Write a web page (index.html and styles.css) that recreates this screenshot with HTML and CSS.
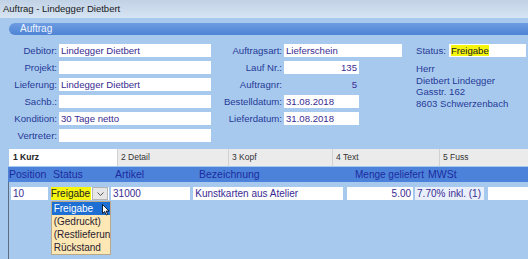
FILE: index.html
```html
<!DOCTYPE html>
<html lang="de">
<head>
  <meta charset="UTF-8" />
  <title>Auftrag - Lindegger Dietbert</title>
  <link rel="stylesheet" href="styles.css">
</head>
<body>
  <div class="titlebar">Auftrag - Lindegger Dietbert</div>

  <div class="section-head">Auftrag</div>

  <div class="form">
    <div class="col col-a">
      <label>Debitor:</label><div class="field">Lindegger Dietbert</div>
      <label>Projekt:</label><div class="field"></div>
      <label>Lieferung:</label><div class="field">Lindegger Dietbert</div>
      <label>Sachb.:</label><div class="field"></div>
      <label>Kondition:</label><div class="field">30 Tage netto</div>
      <label>Vertreter:</label><div class="field"></div>
    </div>
    <div class="col col-b">
      <label>Auftragsart:</label><div class="field">Lieferschein</div>
      <label>Lauf Nr.:</label><div class="field short num">135</div>
      <label>Auftragnr:</label><div class="plain short num">5</div>
      <label>Bestelldatum:</label><div class="field short">31.08.2018</div>
      <label>Lieferdatum:</label><div class="field short">31.08.2018</div>
    </div>
    <div class="col col-c">
      <div class="status-row">
        <label>Status:</label>
        <div class="field status-field"><span class="mark">Freigabe</span></div>
      </div>
      <div class="address">
        <div>Herr</div>
        <div>Dietbert Lindegger</div>
        <div>Gasstr. 162</div>
        <div>8603 Schwerzenbach</div>
      </div>
    </div>
  </div>

  <div class="tabs">
    <div class="tab active t1">1 Kurz</div>
    <div class="tab t2">2 Detail</div>
    <div class="tab t3">3 Kopf</div>
    <div class="tab t4">4 Text</div>
    <div class="tab t5">5 Fuss</div>
  </div>

  <div class="grid-head">
    <div class="h h-pos">Position</div>
    <div class="h h-status">Status</div>
    <div class="h h-art">Artikel</div>
    <div class="h h-bez">Bezeichnung</div>
    <div class="h h-menge">Menge geliefert</div>
    <div class="h h-mwst">MWSt</div>
  </div>

  <div class="grid-body">
    <div class="grid-row">
      <div class="cell c-pos">10</div>
      <div class="cell c-status">
        <span class="mark">Freigabe</span>
        <span class="drop-btn">
          <svg width="9" height="6" viewBox="0 0 9 6"><path d="M1.5 1.5 L4.5 4.5 L7.5 1.5" fill="none" stroke="#555" stroke-width="1"/></svg>
        </span>
        <div class="drop-list">
          <div class="opt selected">Freigabe</div>
          <div class="opt">(Gedruckt)</div>
          <div class="opt">(Restlieferung)</div>
          <div class="opt">Rückstand</div>
        </div>
        <svg class="pointer" width="8" height="12" viewBox="0 0 8 12"><path d="M0.5 0.5 L0.5 9.5 L2.7 7.5 L4.3 11 L5.6 10.4 L4.1 7 L7 7 Z" fill="#fff" stroke="#000" stroke-width="0.8"/></svg>
      </div>
      <div class="cell c-art">31000</div>
      <div class="cell c-bez">Kunstkarten aus Atelier</div>
      <div class="cell c-menge num">5.00</div>
      <div class="cell c-mwst">7.70% inkl. (1)</div>
      <div class="cell c-extra"></div>
    </div>
  </div>
</body>
</html>
```

FILE: styles.css
```css
body {
  margin: 0;
  width: 528px;
  height: 259px;
  overflow: hidden;
  background: #a8c9ee;
  font-family: "Liberation Sans", Arial, sans-serif;
}

.titlebar {
  height: 18px;
  line-height: 18px;
  padding-left: 3px;
  font-size: 9.5px;
  color: #1a1a1a;
  background: linear-gradient(#c2d2e5, #d6e4f3);
}

.section-head {
  margin: 5px 0 0 9px;
  height: 12px;
  line-height: 12px;
  padding-left: 11px;
  font-size: 10px;
  color: #eef3ff;
  background: linear-gradient(#6c9ce2, #4e83d4);
  border-radius: 6px 0 0 6px;
}

.form {
  display: flex;
  margin-top: 7px;
  font-size: 9.6px;
}

.col {
  display: grid;
  grid-auto-rows: 17px;
  align-items: center;
  column-gap: 2px;
}

.col-a {
  width: 211px;
  grid-template-columns: 57px 152px;
}

.col-b {
  width: 205px;
  grid-template-columns: 71px 118px;
}

.col-c {
  display: block;
  flex: 1;
}

label {
  text-align: right;
  color: #263a97;
  white-space: nowrap;
}

.field {
  height: 13px;
  line-height: 13px;
  padding: 0 2px;
  box-sizing: border-box;
  background: #fff;
  color: #3a2b93;
  white-space: nowrap;
  overflow: hidden;
}

.plain {
  color: #3a2b93;
  padding: 0 2px;
  box-sizing: border-box;
}

.short {
  width: 75px;
}

.num {
  text-align: right;
}

.status-row {
  display: flex;
  align-items: center;
  height: 17px;
}

.status-field {
  width: 77px;
  margin-left: 3px;
}

.mark {
  background: #f5f50e;
  color: #222;
}

.address {
  margin-top: 4px;
  line-height: 11.5px;
  color: #263a97;
}

.tabs {
  display: flex;
  margin: 5px 0 0 9px;
  height: 17px;
  font-size: 8.5px;
}

.tab {
  line-height: 17px;
  padding-left: 3px;
  box-sizing: border-box;
  background: #ebebeb;
  border-right: 1px solid #d2d2d2;
  color: #333;
}

.tab.active {
  background: #fff;
  font-weight: bold;
  padding-left: 4px;
  color: #222;
}

.t1 { width: 109px; }
.t2 { width: 111px; }
.t3 { width: 104px; }
.t4 { width: 107px; }
.t5 { flex: 1; border-right: none; }

.grid-head {
  display: flex;
  margin: 1px 0 0 8px;
  height: 15px;
  line-height: 15px;
  background: #4d82da;
  color: #1c2c9e;
  font-size: 10.5px;
}

.h {
  white-space: nowrap;
  padding-left: 1px;
}

.h-pos { width: 43px; }
.h-status { width: 61px; }
.h-art { width: 83px; }
.h-bez { width: 155px; }
.h-menge { width: 72px; font-size: 10px; }

.grid-body {
  margin-left: 8px;
  height: 77px;
  border-left: 1px solid #5d6d84;
}

.grid-row {
  display: flex;
  padding-top: 5px;
  font-size: 10px;
}

.cell {
  position: relative;
  height: 13px;
  line-height: 13px;
  padding: 0 2px;
  box-sizing: border-box;
  background: #fff;
  color: #3a2b93;
  white-space: nowrap;
}

.c-pos { width: 37px; margin-left: 2px; }
.c-status { width: 59px; margin-left: 3px; padding: 0; display: flex; align-items: center; }
.c-art { width: 80px; margin-left: 2px; }
.c-bez { width: 151px; margin-left: 3px; }
.c-menge { width: 67px; margin-left: 4px; }
.c-mwst { width: 70px; margin-left: 2px; background: #e9f0fb; }
.c-extra { width: 40px; margin-left: 4px; }

.c-status .mark {
  height: 13px;
  line-height: 13px;
  padding-right: 1px;
}

.drop-btn {
  display: flex;
  align-items: center;
  justify-content: center;
  width: 14px;
  height: 11px;
  margin-left: auto;
  margin-right: 1px;
  background: #e6e6e6;
  border: 1px solid #b4b4b4;
}

.drop-list {
  position: absolute;
  left: 0;
  top: 14px;
  width: 58px;
  background: #fde7b4;
  border: 1px solid #b9a98a;
  overflow: hidden;
  z-index: 2;
}

.opt {
  height: 13px;
  line-height: 13px;
  padding-left: 2px;
  color: #2a2230;
  white-space: nowrap;
}

.opt.selected {
  background: #1d6fd4;
  color: #fff;
}

.pointer {
  position: absolute;
  left: 51px;
  top: 17px;
  z-index: 3;
}
```
